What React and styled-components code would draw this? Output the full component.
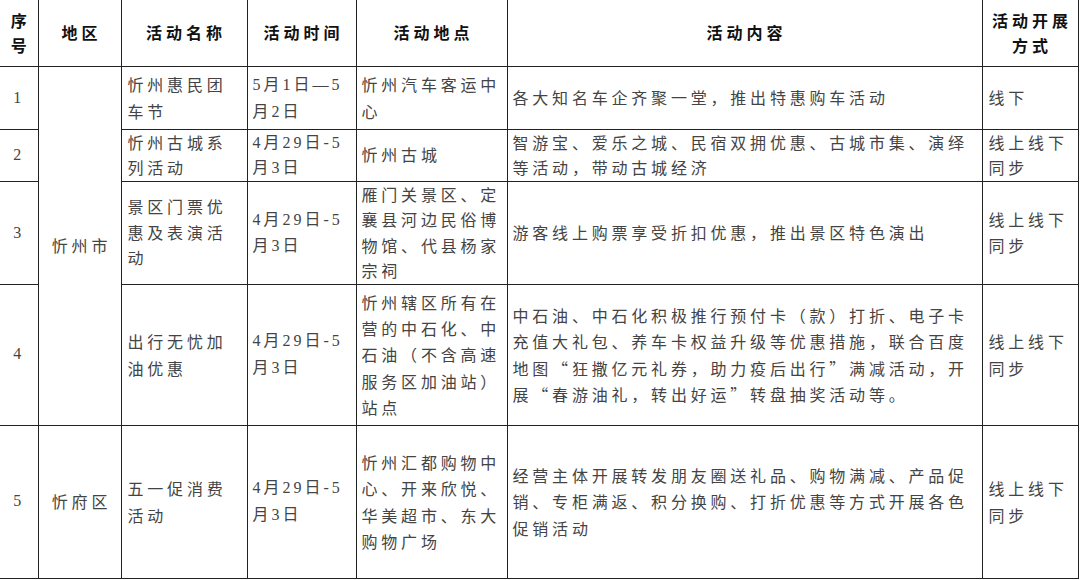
import React from 'react';
import styled, { createGlobalStyle } from 'styled-components';

const GlobalStyle = createGlobalStyle`
  html, body {
    margin: 0;
    padding: 0;
    background: #ffffff;
  }
  body {
    font-family: "Noto Sans CJK SC", "Liberation Serif", sans-serif;
  }
`;

const Page = styled.div`
  width: 1080px;
  height: 580px;
  overflow: hidden;
  background: #ffffff;
`;

const Table = styled.table`
  width: 1078px;
  table-layout: fixed;
  border-collapse: collapse;
  border-width: 1px;
  border-color: #222;
  border-style: hidden solid solid hidden;
`;

const Row = styled.tr`
  height: ${({ $h }) => $h}px;
`;

const HeadCell = styled.th`
  border: 1px solid #222;
  padding: 0 0 0 4px;
  font-size: 16px;
  font-weight: 700;
  line-height: 25px;
  letter-spacing: 4px;
  color: #111;
  text-align: center;
  vertical-align: middle;
`;

const Cell = styled.td`
  border: 1px solid #222;
  padding: 0 4px 0 ${({ $pl }) => ($pl != null ? $pl : 5)}px;
  font-family: ${({ $serif }) =>
    $serif
      ? '"Liberation Serif", "Noto Sans CJK SC", serif'
      : '"Noto Sans CJK SC", "Liberation Serif", sans-serif'};
  font-size: 16px;
  font-weight: 400;
  line-height: ${({ $lh }) => $lh || 25.5}px;
  letter-spacing: ${({ $serif }) => ($serif ? '3px' : '3.8px')};
  color: #444;
  text-align: ${({ $center }) => ($center ? 'center' : 'left')};
  vertical-align: middle;
`;

const widths = [38, 83, 126, 109, 151, 475, 96];

const headers = ['序号', '地区', '活动名称', '活动时间', '活动地点', '活动内容', '活动开展方式'];

const rows = [
  {
    h: 63,
    lh: 27,
    no: '1',
    region: { text: '忻州市', span: 4 },
    name: '忻州惠民团车节',
    time: '5月1日—5月2日',
    place: '忻州汽车客运中心',
    content: '各大知名车企齐聚一堂，推出特惠购车活动',
    mode: '线下',
  },
  {
    h: 52,
    no: '2',
    name: '忻州古城系列活动',
    time: '4月29日-5月3日',
    place: '忻州古城',
    content: '智游宝、爱乐之城、民宿双拥优惠、古城市集、演绎等活动，带动古城经济',
    mode: '线上线下同步',
  },
  {
    h: 103,
    no: '3',
    name: '景区门票优惠及表演活动',
    time: '4月29日-5月3日',
    place: '雁门关景区、定襄县河边民俗博物馆、代县杨家宗祠',
    content: '游客线上购票享受折扣优惠，推出景区特色演出',
    mode: '线上线下同步',
  },
  {
    h: 141,
    lh: 26.3,
    no: '4',
    name: '出行无忧加油优惠',
    time: '4月29日-5月3日',
    place: '忻州辖区所有在营的中石化、中石油（不含高速服务区加油站）站点',
    content:
      '中石油、中石化积极推行预付卡（款）打折、电子卡充值大礼包、养车卡权益升级等优惠措施，联合百度地图“狂撒亿元礼券，助力疫后出行”满减活动，开展“春游油礼，转出好运”转盘抽奖活动等。',
    mode: '线上线下同步',
  },
  {
    h: 153,
    lh: 26.3,
    no: '5',
    region: { text: '忻府区', span: 1 },
    name: '五一促消费活动',
    time: '4月29日-5月3日',
    place: '忻州汇都购物中心、开来欣悦、华美超市、东大购物广场',
    content: '经营主体开展转发朋友圈送礼品、购物满减、产品促销、专柜满返、积分换购、打折优惠等方式开展各色促销活动',
    mode: '线上线下同步',
  },
];

export default function App() {
  return (
    <Page>
      <GlobalStyle />
      <Table>
        <colgroup>
          {widths.map((w, i) => (
            <col key={i} style={{ width: w }} />
          ))}
        </colgroup>
        <thead>
          <Row $h={66}>
            {headers.map((t) => (
              <HeadCell key={t}>{t}</HeadCell>
            ))}
          </Row>
        </thead>
        <tbody>
          {rows.map((r) => (
            <Row key={r.no} $h={r.h}>
              <Cell $serif $center $pl={4} $lh={r.lh}>{r.no}</Cell>
              {r.region && (
                <Cell rowSpan={r.region.span} $center $pl={8} $lh={r.lh}>
                  {r.region.text}
                </Cell>
              )}
              <Cell $pl={6} $lh={r.lh}>{r.name}</Cell>
              <Cell $serif $pl={5} $lh={r.lh}>{r.time}</Cell>
              <Cell $pl={5} $lh={r.lh}>{r.place}</Cell>
              <Cell $pl={5} $lh={r.lh}>{r.content}</Cell>
              <Cell $pl={6} $lh={r.lh}>{r.mode}</Cell>
            </Row>
          ))}
        </tbody>
      </Table>
    </Page>
  );
}
